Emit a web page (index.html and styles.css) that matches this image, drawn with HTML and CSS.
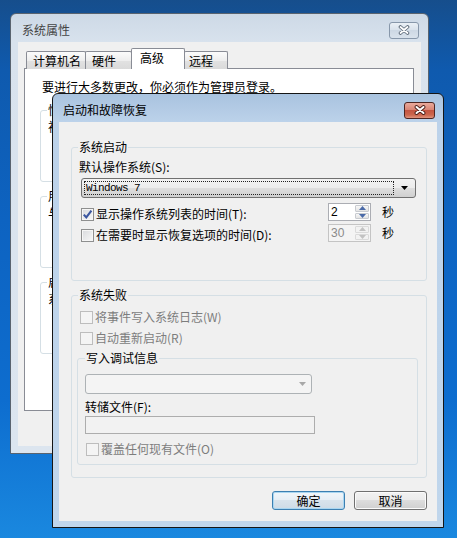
FILE: index.html
```html
<!DOCTYPE html>
<html lang="zh-CN">
<head>
<meta charset="utf-8">
<title>启动和故障恢复</title>
<link rel="stylesheet" href="styles.css">
</head>
<body>
<div class="desktop">
  <section class="win win-back">
    <header class="titlebar">
      <span class="title title-off">系统属性</span>
      <span class="close close-off"><svg width="12" height="10" viewBox="0 0 12 10"><path d="M2.5 2 L9.5 8 M9.5 2 L2.5 8" stroke="#5d6a79" stroke-width="3.6" stroke-linecap="round" fill="none"/><path d="M2.5 2 L9.5 8 M9.5 2 L2.5 8" stroke="#ffffff" stroke-width="1.8" stroke-linecap="round" fill="none"/></svg></span>
    </header>
    <div class="client client-back">
      <div class="tabs">
        <div class="tab tab-1">计算机名</div>
        <div class="tab tab-2">硬件</div>
        <div class="tab tab-on">高级</div>
        <div class="tab tab-4">远程</div>
      </div>
      <div class="panel">
        <p class="note">要进行大多数更改，你必须作为管理员登录。</p>
        <fieldset class="group bgroup">
          <legend>性能</legend>
          <p>视觉效果，处理器计划，内存使用，以及虚拟内存</p>
          <div class="bgroup-act"><span class="btn">设置(S)...</span></div>
        </fieldset>
        <fieldset class="group bgroup">
          <legend>用户配置文件</legend>
          <p>与登录有关的桌面设置</p>
          <div class="bgroup-act"><span class="btn">设置(E)...</span></div>
        </fieldset>
        <fieldset class="group bgroup">
          <legend>启动和故障恢复</legend>
          <p>系统启动、系统失败和调试信息</p>
          <div class="bgroup-act"><span class="btn">设置(T)...</span></div>
        </fieldset>
      </div>
    </div>
  </section>

  <section class="win win-dlg">
    <header class="titlebar">
      <span class="title">启动和故障恢复</span>
      <span class="close close-on"><svg width="12" height="10" viewBox="0 0 12 10"><path d="M2.5 2 L9.5 8 M9.5 2 L2.5 8" stroke="#4a1f1a" stroke-width="3.8" stroke-linecap="round" fill="none"/><path d="M2.5 2 L9.5 8 M9.5 2 L2.5 8" stroke="#ffffff" stroke-width="2" stroke-linecap="round" fill="none"/></svg></span>
    </header>
    <div class="client client-dlg">
      <fieldset class="group g-start">
        <legend>系统启动</legend>
        <div class="lbl">默认操作系统(S):</div>
        <div class="combo">
          <span class="combo-val">Windows 7</span>
          <span class="combo-arrow"><svg width="7" height="4" viewBox="0 0 7 4"><polygon points="0,0 7,0 3.5,4" fill="#000"/></svg></span>
        </div>
        <div class="row row-spin">
          <span class="cb"><svg width="11" height="11" viewBox="0 0 11 11"><path d="M1.8 5.6 L4.3 8.4 L9.4 1.6" stroke="#3a56a0" stroke-width="2.1" fill="none"/></svg></span>
          <span class="row-text">显示操作系统列表的时间(T):</span>
          <span class="spin">
            <span class="spin-edit">2</span>
            <span class="spin-btns">
              <span class="spin-b"><svg width="7" height="4" viewBox="0 0 7 4"><polygon points="3.5,0 7,4 0,4" fill="#4a6aa8"/></svg></span>
              <span class="spin-b"><svg width="7" height="4" viewBox="0 0 7 4"><polygon points="0,0 7,0 3.5,4" fill="#4a6aa8"/></svg></span>
            </span>
          </span>
          <span class="unit">秒</span>
        </div>
        <div class="row row-spin">
          <span class="cb"></span>
          <span class="row-text">在需要时显示恢复选项的时间(D):</span>
          <span class="spin spin-off">
            <span class="spin-edit">30</span>
            <span class="spin-btns">
              <span class="spin-b"><svg width="7" height="4" viewBox="0 0 7 4"><polygon points="3.5,0 7,4 0,4" fill="#c2c2c2"/></svg></span>
              <span class="spin-b"><svg width="7" height="4" viewBox="0 0 7 4"><polygon points="0,0 7,0 3.5,4" fill="#c2c2c2"/></svg></span>
            </span>
          </span>
          <span class="unit">秒</span>
        </div>
      </fieldset>

      <fieldset class="group g-fail">
        <legend>系统失败</legend>
        <div class="row row-off">
          <span class="cb cb-off"></span>
          <span class="row-text">将事件写入系统日志(W)</span>
        </div>
        <div class="row row-off">
          <span class="cb cb-off"></span>
          <span class="row-text">自动重新启动(R)</span>
        </div>
        <fieldset class="group g-debug">
          <legend>写入调试信息</legend>
          <div class="combo-off"><svg width="7" height="4" viewBox="0 0 7 4"><polygon points="0,0 7,0 3.5,4" fill="#a8a8a8"/></svg></div>
          <div class="lbl lbl-file">转储文件(F):</div>
          <div class="textbox"></div>
          <div class="row row-off row-over">
            <span class="cb cb-off"></span>
            <span class="row-text">覆盖任何现有文件(O)</span>
          </div>
        </fieldset>
      </fieldset>

      <div class="actions">
        <span class="btn btn-default">确定</span>
        <span class="btn">取消</span>
      </div>
    </div>
  </section>
</div>
</body>
</html>
```
FILE: styles.css
```css
* { box-sizing: border-box; }
html, body { margin: 0; padding: 0; }
body {
  width: 457px;
  height: 538px;
  overflow: hidden;
  font-family: "Noto Sans CJK SC", "Noto Sans", sans-serif;
  font-size: 12px;
  line-height: 14px;
  color: #000;
}
p { margin: 0; }

.desktop {
  position: relative;
  width: 457px;
  height: 538px;
  overflow: hidden;
  background: linear-gradient(180deg, #164e8c 0, #0f5aae 70px, #0d63c1 220px, #0d6dcf 400px, #1a88df 538px);
}

/* windows */
.win {
  position: absolute;
  display: flex;
  flex-direction: column;
  border: 1px solid #000;
  border-radius: 6px 6px 0 0;
}
.win-back {
  left: 10px;
  top: 13px;
  width: 419px;
  height: 441px;
  padding: 0 7px 7px;
  border-color: #59636f;
  background: linear-gradient(180deg, #cdd9e6 0, #d8e2ed 28px, #dce5ef 100%);
}
.win-dlg {
  left: 52px;
  top: 93px;
  width: 392px;
  height: 435px;
  padding: 0 6px 6px;
  border-color: #151515;
  background: linear-gradient(180deg, #a9c3df 0, #bcd2ea 28px, #c0d6ec 100%);
}
.titlebar {
  flex: none;
  height: 28px;
  display: flex;
  align-items: center;
  justify-content: space-between;
  padding: 4px 2px 0 4px;
}
.title-off { color: #444; }
.close {
  display: flex;
  align-items: center;
  justify-content: center;
  height: 17px;
  border-radius: 3px;
}
.close-off {
  width: 30px;
  border: 1px solid #8797aa;
  background: linear-gradient(#eaf0f6, #d8e1eb 50%, #cdd8e4 50%, #d9e2ec);
}
.close-on {
  width: 31px;
  border: 1px solid #4e2622;
  background: linear-gradient(#eaaa9c, #d98676 45%, #c45541 50%, #cc674e 80%, #e0957f);
}

/* back window */
.client { flex: 1; background: #f0f0f0; }
.client-back {
  padding: 6px 7px 0 6px;
  display: flex;
  flex-direction: column;
}
.tabs {
  position: relative;
  z-index: 1;
  display: flex;
  align-items: flex-end;
  height: 21px;
  margin: 0 0 -1px 2px;
}
.tab {
  height: 18px;
  margin-left: -1px;
  padding: 2px 0 0 6px;
  border: 1px solid #898c95;
  border-bottom: none;
  border-radius: 2px 2px 0 0;
  background: linear-gradient(#fbfbfb, #eeeeee 50%, #e2e2e2 50%, #dadada);
  white-space: nowrap;
}
.tab-1 { width: 60px; margin-left: 0; }
.tab-2 { width: 47px; }
.tab-on {
  width: 54px;
  height: 21px;
  padding: 2px 0 0 8px;
  background: #fff;
}
.tab-4 { width: 44px; padding-left: 4px; }
.panel {
  height: 343px;
  border: 1px solid #898c95;
  background: #fff;
  padding: 11px 15px 0;
  display: flex;
  flex-direction: column;
  gap: 7px;
}
.note { margin: 0 0 2px 2px; }

.group {
  margin: 0;
  min-width: 0;
  border: 1px solid #d5dfe5;
  border-radius: 3px;
  padding: 6px 0 0 7px;
}
.group > legend {
  padding: 0 1px;
  margin-left: -1px;
  line-height: 14px;
}
.bgroup {
  height: 79px;
  padding: 3px 8px 0 7px;
}
.bgroup-act {
  display: flex;
  justify-content: flex-end;
  margin-top: 22px;
}

/* dialog */
.client-dlg {
  padding: 18px 10px 0 12px;
  display: flex;
  flex-direction: column;
}
.g-start { height: 141px; }
.g-fail { height: 190px; margin-top: 7px; }
.g-debug {
  width: 341px;
  height: 114px;
  margin: 4px 0 0 -2px;
  padding-top: 9px;
}
.g-debug > legend { margin-left: 0; }

.combo {
  display: flex;
  align-items: center;
  width: 335px;
  height: 20px;
  margin: 4px 0 0 2px;
  padding: 2px;
  border: 1px solid #707070;
  border-radius: 3px;
  background: linear-gradient(#f3f3f3, #ececec 50%, #dedede 50%, #d0d0d0);
}
.combo-val {
  flex: 1;
  height: 14px;
  border: 1px dotted #222;
  padding-left: 1px;
  font-family: "Liberation Mono", monospace;
  font-size: 11px;
  line-height: 12px;
  letter-spacing: -0.6px;
}
.combo-arrow {
  width: 19px;
  display: flex;
  justify-content: center;
  padding-left: 2px;
}

.row {
  display: flex;
  align-items: center;
  height: 18px;
  margin: 5px 0 0 2px;
}
.row + .row { margin-top: 3px; }
.row-text { flex: 1; white-space: nowrap; }
.row-spin .cb, .row-spin .row-text { margin-top: 4px; }
.row-off { margin-left: 1px; color: #7d7d7d; }
.g-fail > .row-off:first-of-type { margin-top: 0; }
.row-over { margin: 6px 0 0 1px; }

.cb {
  flex: none;
  width: 13px;
  height: 13px;
  margin-right: 2px;
  display: flex;
  align-items: center;
  justify-content: center;
  border: 1px solid #8e8f8f;
  background: linear-gradient(135deg, #d8dadd, #f8f8f8);
  box-shadow: inset 0 0 0 1px #f6f6f6;
}
.cb-off {
  border-color: #bdbdbd;
  background: #f4f4f4;
  box-shadow: none;
}

.spin {
  flex: none;
  display: flex;
  width: 43px;
  height: 18px;
  border: 1px solid #abadb3;
  background: #fff;
}
.spin-edit {
  flex: 1;
  padding-left: 2px;
  font-family: "Liberation Sans", sans-serif;
  font-size: 12px;
  line-height: 16px;
}
.spin-btns {
  width: 16px;
  display: flex;
  flex-direction: column;
  padding: 1px;
  gap: 1px;
}
.spin-b {
  flex: 1;
  display: flex;
  align-items: center;
  justify-content: center;
  border: 1px solid #c8cbd0;
  border-radius: 1px;
  background: linear-gradient(#f7f7f7, #e4e4e4);
}
.spin-off { background: #f4f4f4; border-color: #c4c4c4; }
.spin-off .spin-edit { color: #8a8a8a; }
.spin-off .spin-b { border-color: #dadada; background: #f2f2f2; }
.unit {
  width: 44px;
  margin-left: 11px;
  margin-right: 0;
}

.lbl-file { margin-top: 6px; }
.combo-off {
  width: 227px;
  height: 20px;
  display: flex;
  align-items: center;
  justify-content: flex-end;
  padding-right: 5px;
  border: 1px solid #adb2b5;
  border-radius: 3px;
  background: #f4f4f4;
}
.textbox {
  width: 230px;
  height: 18px;
  margin-top: 2px;
  border: 1px solid #adadad;
  background: #f2f2f2;
}

.actions {
  display: flex;
  justify-content: flex-end;
  gap: 9px;
  margin-top: 13px;
}
.btn {
  width: 73px;
  height: 19px;
  display: flex;
  align-items: center;
  justify-content: center;
  border: 1px solid #707070;
  border-radius: 3px;
  background: linear-gradient(#f2f2f2, #ebebeb 50%, #dddddd 50%, #cfcfcf);
  box-shadow: inset 0 0 0 1px #fbfbfb;
  white-space: nowrap;
}
.btn-default {
  border-color: #3c7fb1;
  background: linear-gradient(#f1f6fa, #e6eef5 50%, #d8e3ec 50%, #cedbe6);
  box-shadow: inset 0 0 0 1px #a9d6f1;
}
```
